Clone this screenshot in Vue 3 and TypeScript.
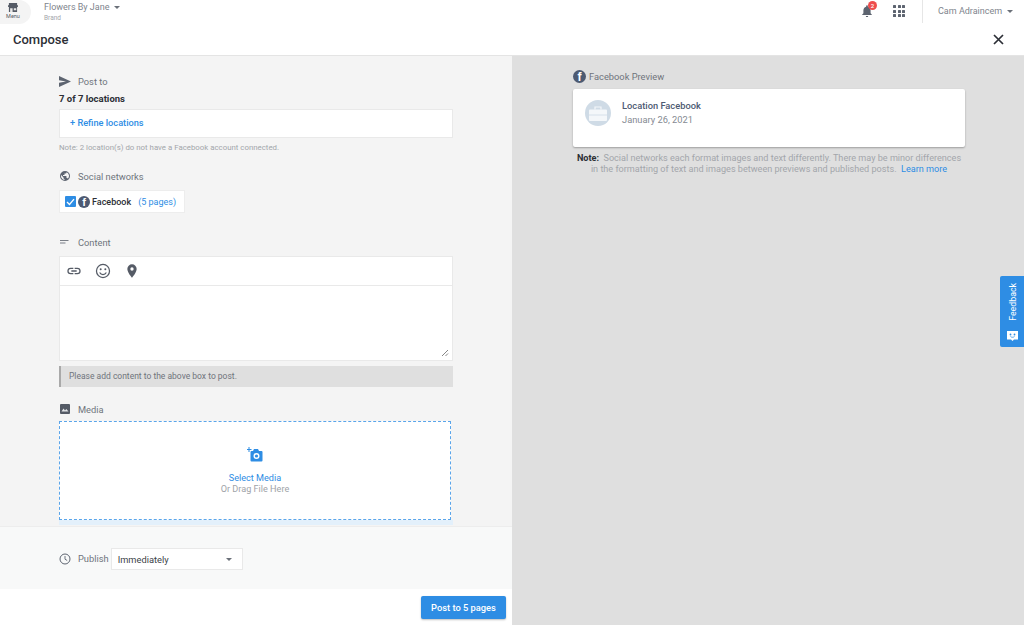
<script setup lang="ts">
const tools = ['link', 'smile', 'pin']
</script>

<template>
  <div class="page">
    <header class="topbar">
      <div class="menu">
        <svg width="10" height="9" viewBox="0 0 12 11"><path d="M1 0h10v2H1zM0 3l1-1h10l1 1v2H0zM1 5h10v6H1z" fill="#555b66"/><path d="M2.500 6.500h3V11h-3zM7 6.500h3V9H7z" fill="#e8e8e8"/></svg>
        <span>Menu</span>
      </div>
      <div class="brand">
        <div class="brand-name">Flowers By Jane <i class="caret"></i></div>
        <div class="brand-sub">Brand</div>
      </div>
      <div class="spacer"></div>
      <div class="bell">
        <svg width="12" height="14" viewBox="0 0 14 15"><path d="M7 0.8a1 1 0 0 1 1 1v.6c2 .5 3.2 2.2 3.2 4.3v3.4l1.4 1.6v.6H1.400v-.6l1.400-1.600V6.700c0-2.100 1.200-3.800 3.200-4.300v-.6a1 1 0 0 1 1-1zM5.600 13.200h2.800a1.400 1.400 0 0 1-2.800 0z" fill="#5d6470"/></svg>
        <b>2</b>
      </div>
      <div class="apps"><i v-for="n in 9" :key="n"></i></div>
      <div class="user">Cam Adraincem <i class="caret"></i></div>
    </header>

    <div class="title-bar">
      <h1>Compose</h1>
      <svg width="11" height="11" viewBox="0 0 11 11"><path d="M1 1l9 9M10 1l-9 9" stroke="#2c2f36" stroke-width="1.700" fill="none"/></svg>
    </div>

    <main class="main">
      <section class="left">
        <div class="form">
          <div class="label first">
            <svg width="12" height="11" viewBox="0 0 12 11"><path d="M0 0l12 5.500L0 11V6.800l7-1.300-7-1.300z" fill="#5d6470"/></svg>
            <span>Post to</span>
          </div>
          <div class="count">7 of 7 locations</div>
          <div class="refine">+ Refine locations</div>
          <div class="hint">Note: 2 location(s) do not have a Facebook account connected.</div>

          <div class="label social">
            <svg width="12" height="12" viewBox="0 0 24 24"><path d="M12 2a10 10 0 1 0 0 20 10 10 0 0 0 0-20zM11 19.900A8 8 0 0 1 4.200 10.200L9 15v1a2 2 0 0 0 2 2zm6.900-2.500A2 2 0 0 0 16 16h-1v-3a1 1 0 0 0-1-1H8v-2h2a1 1 0 0 0 1-1V7h2a2 2 0 0 0 2-2v-.4a8 8 0 0 1 2.900 12.800z" fill="#5d6470"/></svg>
            <span>Social networks</span>
          </div>
          <div class="network">
            <span class="check"><svg width="9" height="8" viewBox="0 0 9 8"><path d="M1 4l2.500 2.500L8 1.200" stroke="#fff" stroke-width="1.300" fill="none"/></svg></span>
            <span class="fb fb-small">f</span>
            <strong>Facebook</strong>
            <span class="pages">(5 pages)</span>
          </div>

          <div class="label content">
            <svg width="12" height="12" viewBox="0 0 12 12"><path d="M1 4h8.500v1H1zM1 6.500h5.500v1H1z" fill="#7a7f87"/></svg>
            <span>Content</span>
          </div>
          <div class="editor">
            <div class="toolbar">
              <template v-for="t in tools" :key="t">
                <svg v-if="t === 'link'" class="tool" width="16" height="16" viewBox="0 0 24 24"><path d="M3.900 12A3.100 3.100 0 0 1 7 8.900h4V7H7a5 5 0 0 0 0 10h4v-1.900H7A3.100 3.100 0 0 1 3.900 12zM8 13h8v-2H8zm9-6h-4v1.900h4a3.100 3.100 0 0 1 0 6.200h-4V17h4a5 5 0 0 0 0-10z" fill="#555b66"/></svg>
                <svg v-else-if="t === 'smile'" class="tool" width="16" height="16" viewBox="0 0 24 24"><circle cx="12" cy="12" r="9.800" stroke="#555b66" stroke-width="1.900" fill="none"/><circle cx="8.500" cy="9.500" r="1.500" fill="#555b66"/><circle cx="15.500" cy="9.500" r="1.500" fill="#555b66"/><path d="M7 14.200c1 2 2.800 3.100 5 3.100s4-1.100 5-3.100" stroke="#555b66" stroke-width="1.800" fill="none"/></svg>
                <svg v-else class="tool" width="16" height="16" viewBox="0 0 24 24"><path d="M12 2a7 7 0 0 0-7 7c0 5.200 7 13 7 13s7-7.800 7-13a7 7 0 0 0-7-7zm0 9.500a2.500 2.500 0 1 1 0-5 2.500 2.500 0 0 1 0 5z" fill="#555b66"/></svg>
              </template>
            </div>
            <div class="textarea">
              <svg class="grip" width="8" height="8" viewBox="0 0 8 8"><path d="M1 7l6-6M4.500 7L7 4.500" stroke="#777" stroke-width="0.900" fill="none"/></svg>
            </div>
          </div>
          <div class="notice">Please add content to the above box to post.</div>

          <div class="label media">
            <svg width="12" height="12" viewBox="0 0 12 12"><rect x="1" y="1" width="10" height="10" rx="1" fill="#555b66"/><path d="M2.500 8.500l2-3 1.500 2 1.300-1.500 2.200 2.500z" fill="#e4e6e8"/></svg>
            <span>Media</span>
          </div>
          <div class="drop">
            <svg width="16" height="15" viewBox="0 0 16 15"><path d="M2.500 0v2H4.500v1H2.500v2H1.500V3H0V2h1.500V0z" fill="#2e8de4"/><path d="M3.500 5a1 1 0 0 1 1-1H6l1-2h4l1 2h2.500a1 1 0 0 1 1 1v8.500a1 1 0 0 1-1 1h-10a1 1 0 0 1-1-1z" fill="#2e8de4"/><circle cx="9.500" cy="9" r="3" fill="#fff"/><circle cx="9.500" cy="9" r="1.600" fill="#2e8de4"/></svg>
            <div class="select">Select Media</div>
            <div class="or">Or Drag File Here</div>
          </div>
          <div class="strip"></div>
        </div>

        <div class="publish">
          <svg width="12" height="12" viewBox="0 0 12 12"><circle cx="6" cy="6" r="5" stroke="#5d6470" stroke-width="1" fill="none"/><path d="M6 3v3.200l2.200 1.300" stroke="#5d6470" stroke-width="0.900" fill="none"/></svg>
          <span class="publish-label">Publish</span>
          <div class="select-box">
            <span>Immediately</span>
            <i class="caret dark"></i>
          </div>
        </div>

        <div class="actions">
          <button class="post" type="button">Post to 5 pages</button>
        </div>
      </section>

      <section class="right">
        <div class="preview-head">
          <span class="fb fb-big">f</span>
          <span>Facebook Preview</span>
        </div>
        <div class="card">
          <div class="avatar">
            <svg width="18" height="15" viewBox="0 0 18 15"><path d="M0 4.500a1 1 0 0 1 1-1h16a1 1 0 0 1 1 1v9.500a1 1 0 0 1-1 1H1a1 1 0 0 1-1-1z" fill="#f4f7fa"/><path d="M6 3.500V1h6v2.500" stroke="#f4f7fa" stroke-width="1.200" fill="none"/><path d="M0 9h18" stroke="#cfdbe6" stroke-width="0.800"/></svg>
          </div>
          <div>
            <div class="loc">Location Facebook</div>
            <div class="date">January 26, 2021</div>
          </div>
        </div>
        <p class="preview-note"><b>Note:</b>&nbsp; Social networks each format images and text differently. There may be minor differences<br />in the formatting of text and images between previews and published posts.&nbsp; <a>Learn more</a></p>
      </section>
    </main>

    <div class="feedback">
      <span>Feedback</span>
      <svg width="11" height="11" viewBox="0 0 11 11"><path d="M0 1h11v8.500H7L5.500 11 4 9.500H0z" fill="#fff"/><circle cx="3.500" cy="4.500" r="0.900" fill="#2e8de4"/><circle cx="7.500" cy="4.500" r="0.900" fill="#2e8de4"/><path d="M3.500 6.500c1 1 3 1 4 0" stroke="#2e8de4" stroke-width="0.800" fill="none"/></svg>
    </div>
  </div>
</template>

<style scoped>
.page {
  position: relative;
  width: 1024px;
  height: 625px;
  overflow: hidden;
  display: flex;
  flex-direction: column;
  background: #fff;
  font-family: Roboto, "Liberation Sans", sans-serif;
  color: #5d6470;
}
.topbar {
  height: 25px;
  flex: none;
  display: flex;
  align-items: flex-start;
  background: #fff;
}
.menu {
  width: 31px;
  height: 24px;
  border-radius: 0 14px 14px 0;
  background: #f4f4f4;
  display: flex;
  flex-direction: column;
  align-items: center;
  padding: 3px 5px 0 0;
  box-sizing: border-box;
  font-size: 5.500px;
  line-height: 7px;
  color: #555b66;
}
.menu svg { display: block; }
.menu span { margin-top: 1px; }
.brand { margin-left: 13px; padding-top: 1px; }
.brand-name {
  font-size: 9px;
  line-height: 12px;
  color: #80858d;
  display: flex;
  align-items: center;
  gap: 5px;
}
.brand-sub {
  font-size: 6.500px;
  line-height: 8px;
  margin-top: 1px;
  color: #a3a6ab;
}
.caret {
  width: 0;
  height: 0;
  display: inline-block;
  border-left: 3.500px solid transparent;
  border-right: 3.500px solid transparent;
  border-top: 3.500px solid #6b7079;
}
.spacer { flex: 1; }
.bell { position: relative; width: 12px; height: 14px; margin-top: 4px; margin-right: 20px; }
.bell svg { display: block; }
.bell b {
  position: absolute;
  left: 7px;
  top: -3px;
  width: 9px;
  height: 9px;
  border-radius: 50%;
  background: #ee4d4d;
  color: #fff;
  font-size: 6px;
  line-height: 9px;
  text-align: center;
  font-weight: 500;
}
.apps {
  width: 12px;
  height: 12px;
  margin-top: 5px;
  margin-right: 17px;
  display: grid;
  grid-template-columns: repeat(3, 3px);
  grid-auto-rows: 3px;
  gap: 1.500px;
}
.apps i { background: #5d6470; border-radius: 0.500px; }
.user {
  height: 23px;
  padding-left: 15px;
  width: 86px;
  border-left: 1px solid #e6e6e6;
  font-size: 9px;
  line-height: 23px;
  color: #80858d;
  display: flex;
  align-items: center;
  gap: 5px;
  white-space: nowrap;
}
.title-bar {
  height: 31px;
  flex: none;
  box-sizing: border-box;
  border-bottom: 1px solid #e4e4e4;
  display: flex;
  align-items: center;
  justify-content: space-between;
  padding: 0 20px 2px 13px;
}
h1 {
  margin: 0;
  font-size: 13px;
  font-weight: 500;
  color: #2c2f36;
}
.main { flex: 1; display: flex; min-height: 0; }
.left {
  width: 512px;
  flex: none;
  display: flex;
  flex-direction: column;
  background: #f4f4f4;
}
.form { height: 470px; flex: none; padding-left: 59px; box-sizing: border-box; }
.label {
  display: flex;
  align-items: center;
  gap: 7px;
  height: 12px;
  font-size: 9.300px;
  color: #6f747c;
}
.first { margin-top: 19px; }
.count {
  margin-top: 6px;
  font-size: 9.500px;
  line-height: 12px;
  font-weight: 700;
  color: #2c2f36;
}
.refine {
  margin-top: 4px;
  width: 394px;
  height: 29px;
  box-sizing: border-box;
  background: #fff;
  border: 1px solid #e9e9e9;
  padding-left: 10px;
  font-size: 9.200px;
  line-height: 26px;
  font-weight: 500;
  color: #2e8de4;
}
.hint {
  margin-top: 5px;
  font-size: 7.850px;
  line-height: 10px;
  color: #a3a6ab;
}
.social { margin-top: 17px; }
.network {
  margin-top: 8px;
  width: 126px;
  height: 23px;
  box-sizing: border-box;
  background: #fff;
  border: 1px solid #ededed;
  display: flex;
  align-items: center;
  padding-left: 5px;
  font-size: 9px;
}
.network strong { margin-left: 2px; font-weight: 500; color: #2c2f36; }
.pages { margin-left: 7px; color: #2e8de4; }
.check {
  width: 11px;
  height: 11px;
  border-radius: 1px;
  background: #2e8de4;
  display: flex;
  align-items: center;
  justify-content: center;
  margin-right: 2px;
}
.fb {
  border-radius: 50%;
  background: #4d5a72;
  color: #fff;
  display: inline-flex;
  justify-content: center;
  align-items: flex-end;
  font-family: "Liberation Sans", sans-serif;
  font-weight: 700;
  overflow: hidden;
}
.fb-small { width: 12px; height: 12px; font-size: 11px; line-height: 11px; }
.fb-big { width: 13px; height: 13px; font-size: 12px; line-height: 12px; }
.content { margin-top: 23px; }
.editor {
  margin-top: 8px;
  width: 394px;
  height: 105px;
  box-sizing: border-box;
  background: #fff;
  border: 1px solid #e9e9e9;
}
.toolbar {
  height: 29px;
  box-sizing: border-box;
  border-bottom: 1px solid #e9e9e9;
  display: flex;
  align-items: center;
  padding-left: 6px;
  gap: 13px;
}
.textarea { position: relative; height: 74px; }
.grip { position: absolute; right: 3px; bottom: 3px; }
.notice {
  margin-top: 5px;
  width: 394px;
  height: 21px;
  box-sizing: border-box;
  background: #dfdfdf;
  border-left: 2px solid #a9a9a9;
  padding-left: 8px;
  font-size: 8.500px;
  line-height: 20px;
  color: #6f747c;
}
.media { margin-top: 16px; }
.drop {
  margin-top: 6px;
  width: 392px;
  height: 99px;
  box-sizing: border-box;
  background: #fff;
  border: 1px dashed #5aa5ea;
  display: flex;
  flex-direction: column;
  align-items: center;
  padding-top: 25px;
}
.select { margin-top: 11px; font-size: 9.100px; line-height: 11px; color: #2e8de4; }
.or { font-size: 9.100px; line-height: 11px; color: #a0a3a8; }
.strip { width: 394px; height: 5px; background: #e3f0fb; }
.publish {
  height: 63px;
  flex: none;
  box-sizing: border-box;
  background: #f8f9f9;
  border-top: 1px solid #ededed;
  display: flex;
  align-items: center;
  padding: 1px 0 0 59px;
  font-size: 9.300px;
}
.publish-label { margin-left: 7px; color: #6f747c; }
.select-box {
  margin-left: 2px;
  width: 132px;
  height: 22px;
  box-sizing: border-box;
  background: #fff;
  border: 1px solid #e9e9e9;
  display: flex;
  align-items: center;
  justify-content: space-between;
  padding: 1px 10px 0 6px;
  color: #3b3f47;
}
.actions {
  flex: 1;
  background: #fff;
  display: flex;
  justify-content: flex-end;
  align-items: flex-start;
  padding: 7px 6px 0 0;
}
.post {
  width: 85px;
  height: 23px;
  padding: 0;
  border: 0;
  border-radius: 2px;
  background: #2e8de4;
  color: #fff;
  font-family: inherit;
  font-size: 9.300px;
  font-weight: 500;
  box-shadow: 0 1px 2px rgba(0, 0, 0, 0.250);
}
.right {
  flex: 1;
  background: #dfdfdf;
  padding: 13px 0 0 61px;
}
.preview-head {
  display: flex;
  align-items: center;
  gap: 3px;
  height: 14px;
  font-size: 9.300px;
  color: #6f747c;
}
.card {
  margin-top: 6px;
  width: 392px;
  height: 58px;
  box-sizing: border-box;
  background: #fff;
  border-radius: 2px;
  box-shadow: 0 1px 2px rgba(0, 0, 0, 0.300);
  display: flex;
  padding: 11px 0 0 12px;
  gap: 11px;
}
.avatar {
  width: 26px;
  height: 26px;
  border-radius: 50%;
  background: #cfdbe6;
  display: flex;
  align-items: center;
  justify-content: center;
}
.avatar svg { display: block; }
.loc {
  font-size: 9.300px;
  line-height: 12px;
  font-weight: 500;
  color: #4d5a72;
}
.date {
  margin-top: 2px;
  font-size: 9.300px;
  line-height: 12px;
  color: #858a92;
}
.preview-note {
  margin: 6px 0 0;
  width: 392px;
  text-align: center;
  font-size: 9.100px;
  line-height: 11px;
  color: #a3a6ab;
  white-space: nowrap;
}
.preview-note b { color: #2c2f36; font-weight: 700; }
.preview-note a { color: #2e8de4; }
.feedback {
  position: absolute;
  right: 0;
  top: 276px;
  width: 24px;
  height: 71px;
  box-sizing: border-box;
  background: #2e8de4;
  border-radius: 2px 0 0 2px;
  display: flex;
  flex-direction: column;
  align-items: center;
  justify-content: space-between;
  padding: 7px 0 6px;
  color: #fff;
}
.feedback span {
  writing-mode: vertical-rl;
  transform: rotate(180deg);
  font-size: 8.800px;
  line-height: 10px;
  margin-left: 2px;
}
</style>
